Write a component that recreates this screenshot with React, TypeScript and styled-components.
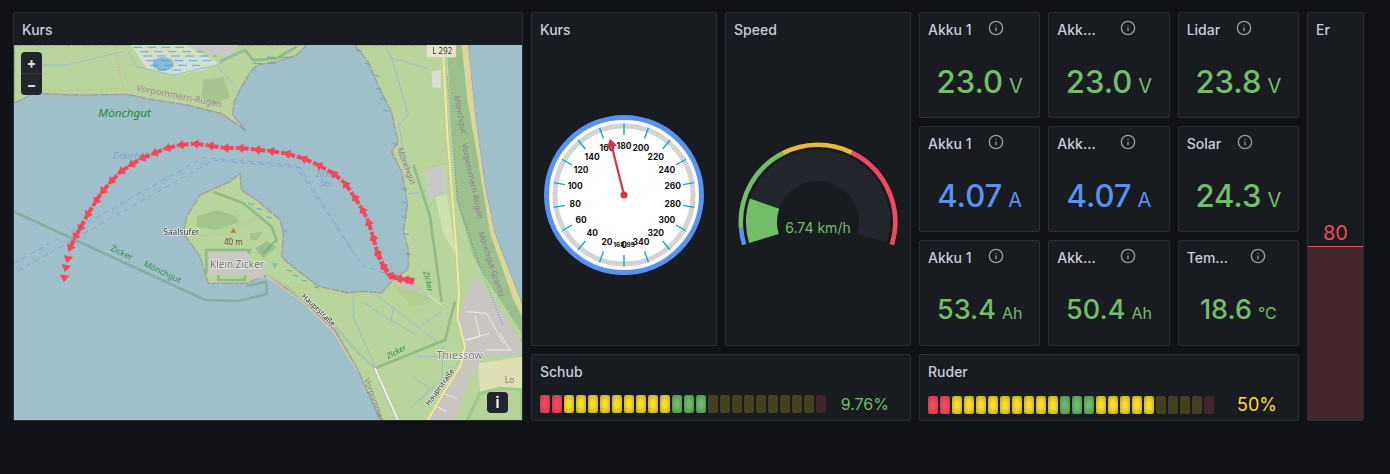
import styled, { createGlobalStyle } from 'styled-components';
import { Info } from 'lucide-react';

const GREEN = '#73bf69';
const BLUE = '#5794f2';
const RED = '#f2495c';
const YELLOW = '#fade2a';

const GlobalStyle = createGlobalStyle`
  html, body {
    margin: 0;
    padding: 0;
    background: #111217;
    font-family: Inter, "Liberation Sans", sans-serif;
    overflow: hidden;
  }
`;

const Dashboard = styled.div`
  display: grid;
  grid-template-columns: 510px 186px 186px repeat(3, 121.33px) 57px;
  grid-template-rows: 106px 106px 106px 67px;
  gap: 8px;
  padding: 12px 0 0 13px;
  height: 462px;
  box-sizing: border-box;
`;

const Panel = styled.section<{ $col?: string; $row?: string }>`
  display: flex;
  flex-direction: column;
  min-width: 0;
  box-sizing: border-box;
  background: #181b1f;
  border: 1px solid #2a2d32;
  border-radius: 2px;
  grid-column: ${(p) => p.$col || 'auto'};
  grid-row: ${(p) => p.$row || 'auto'};
`;

const Header = styled.header`
  display: flex;
  align-items: center;
  flex: none;
  height: 32px;
  padding: 0 8px;
`;

const Title = styled.h2<{ $width?: number }>`
  margin: 0;
  font-size: 14px;
  font-weight: 500;
  color: #ccccdc;
  white-space: nowrap;
  ${(p) => (p.$width ? `width: ${p.$width}px;` : '')}
`;

const InfoIcon = styled(Info)`
  margin-left: 16px;
  margin-top: -2px;
  color: #9a9ca3;
  flex: none;
`;

const MapBody = styled.div`
  position: relative;
  flex: 1;
  min-height: 0;
  overflow: hidden;
  svg {
    display: block;
  }
`;

const MapSvg = styled.svg`
  filter: blur(0.45px);
`;

const ZoomControls = styled.div`
  position: absolute;
  top: 7px;
  left: 7px;
  width: 21px;
  border-radius: 4px;
  overflow: hidden;
  background: #22252b;
`;

const ZoomButton = styled.div`
  display: flex;
  align-items: center;
  justify-content: center;
  height: 21px;
  color: #d8d9df;
  font-size: 14px;
  font-weight: 800;
  line-height: 1;
  & + & {
    border-top: 1px solid #33363c;
  }
`;

const AttributionButton = styled.div`
  position: absolute;
  right: 14px;
  bottom: 7px;
  display: flex;
  align-items: center;
  justify-content: center;
  width: 21px;
  height: 21px;
  border-radius: 4px;
  background: #22252b;
  color: #f0f0f4;
  font-size: 15px;
  font-weight: 700;
`;

const GaugeBody = styled.div`
  flex: 1;
  min-height: 0;
  display: flex;
  align-items: center;
  justify-content: center;
`;

const StatBody = styled.div<{ $color: string }>`
  flex: 1;
  display: flex;
  align-items: baseline;
  justify-content: center;
  padding-top: 14px;
  color: ${(p) => p.$color};
`;

const StatNumber = styled.span<{ $size: number }>`
  font-size: ${(p) => p.$size}px;
  line-height: 46px;
  font-weight: 500;
`;

const StatUnit = styled.span<{ $size: number }>`
  margin-left: 6px;
  font-size: ${(p) => p.$size}px;
  font-weight: 400;
`;

const BarRow = styled.div`
  display: flex;
  align-items: center;
  justify-content: space-between;
  padding: 7px 21px 0 8px;
`;

const Cells = styled.div`
  display: flex;
  gap: 2px;
`;

const Cell = styled.div<{ $color: string; $edge: string; $dim: boolean }>`
  width: 10px;
  height: 18px;
  border-radius: 2px;
  background: ${(p) => (p.$dim
    ? p.$color
    : `radial-gradient(ellipse at center, ${p.$color} 25%, ${p.$edge} 100%)`)};
  opacity: ${(p) => (p.$dim ? 0.2 : 1)};
`;

const BarValue = styled.div<{ $color: string; $size: number }>`
  font-size: ${(p) => p.$size}px;
  color: ${(p) => p.$color};
`;

const ErBody = styled.div`
  flex: 1;
  display: flex;
  flex-direction: column;
  justify-content: flex-end;
  align-items: stretch;
`;

const ErValue = styled.div`
  text-align: center;
  font-size: 20px;
  line-height: 24px;
  margin-bottom: 1px;
  color: ${RED};
`;

const ErFill = styled.div<{ $height: number }>`
  height: ${(p) => p.$height}px;
  background: #43272d;
  border-top: 1px solid ${RED};
`;

const polar = (cx: number, cy: number, r: number, deg: number) => {
  const a = (deg * Math.PI) / 180;
  return [cx + r * Math.sin(a), cy - r * Math.cos(a)];
};

const arcPath = (cx: number, cy: number, r: number, from: number, to: number) => {
  const [x1, y1] = polar(cx, cy, r, from);
  const [x2, y2] = polar(cx, cy, r, to);
  return `M${x1} ${y1}A${r} ${r} 0 ${to - from > 180 ? 1 : 0} 1 ${x2} ${y2}`;
};

const CompassGauge = () => {
  const c = 85;
  const major = Array.from({ length: 18 }, (_, i) => i * 20);
  const minor = Array.from({ length: 180 }, (_, i) => i * 2);
  const [tx, ty] = polar(c, c, 58, -14);
  const [bx, by] = polar(c, c, 50, -14);
  const [lx, ly] = polar(c, c, 50, -20);
  const [rx, ry] = polar(c, c, 50, -8);
  return (
    <svg width={170} height={170} viewBox="0 0 170 170">
      <circle cx={c} cy={c} r={77.5} fill="#fff" stroke={BLUE} strokeWidth={5} />
      <circle cx={c} cy={c} r={69} fill="none" stroke="#d6d6d6" strokeWidth={5} />
      {minor.map((m) => {
        const [x1, y1] = polar(c, c, 66.5, m);
        const [x2, y2] = polar(c, c, 71.5, m);
        return <line key={m} x1={x1} y1={y1} x2={x2} y2={y2} stroke="#c6c6c6" strokeWidth={0.4} />;
      })}
      {major.map((v) => {
        const angle = 180 + v;
        const [x1, y1] = polar(c, c, 71.5, angle);
        const [x2, y2] = polar(c, c, 60, angle);
        const [tx2, ty2] = polar(c, c, 49.5, angle);
        return (
          <g key={v}>
            <line x1={x1} y1={y1} x2={x2} y2={y2} stroke="#0ea5d0" strokeWidth={1.4} />
            <text x={tx2} y={ty2 + 3} textAnchor="middle" fontSize={8.5} fontWeight={700} fill="#111">{v}</text>
          </g>
        );
      })}
      <text x={c} y={c + 52} textAnchor="middle" fontSize={6.5} fontWeight={700} fill="#111">168.95</text>
      <line x1={c} y1={c} x2={bx} y2={by} stroke="#e02f44" strokeWidth={2.2} />
      <polygon points={`${tx},${ty} ${lx},${ly} ${rx},${ry}`} fill="#e02f44" />
      <circle cx={c} cy={c} r={3.5} fill="#e02f44" />
    </svg>
  );
};

const SpeedGauge = () => {
  const cx = 92;
  const cy = 177;
  const ring: [string, number, number][] = [
    [BLUE, -107, -94.5],
    [GREEN, -94.5, -27.3],
    ['#eab839', -27.3, 26],
    [RED, 26, 107],
  ];
  return (
    <svg width={184} height={300} viewBox="0 0 184 300">
      {ring.map(([color, from, to]) => (
        <path key={color} d={arcPath(cx, cy, 77.2, from, to)} fill="none" stroke={color} strokeWidth={4.6} />
      ))}
      <path d={arcPath(cx, cy, 56.5, -71, 107)} fill="none" stroke="#22252b" strokeWidth={31} />
      <path d={arcPath(cx, cy, 56.5, -107, -71)} fill="none" stroke={GREEN} strokeWidth={31} />
      <text x={cx} y={cy + 11} textAnchor="middle" fontSize={14} fill={GREEN}>6.74 km/h</text>
    </svg>
  );
};

const pts = (s: number[]) => {
  const out: string[] = [];
  for (let i = 0; i < s.length; i += 2) out.push(`${s[i]},${s[i + 1]}`);
  return out.join(' ');
};

const NORTH_LAND = [42, 135, 920, 135, 890, 165, 830, 185, 772, 195, 752, 215, 722, 265, 702, 305, 698, 345, 737, 393, 707, 370, 662, 340, 562, 315, 462, 300, 382, 283, 222, 285, 102, 280, 42, 310];
const MAIN_LAND = [1064, 135, 1104, 185, 1134, 255, 1174, 335, 1194, 425, 1175, 455, 1205, 515, 1215, 565, 1222, 615, 1210, 695, 1225, 749, 1224, 809, 1190, 829, 1144, 879, 1094, 874, 1044, 879, 954, 858, 864, 789, 845, 770, 850, 700, 840, 660, 770, 600, 725, 570, 720, 520, 690, 545, 600, 585, 560, 650, 550, 700, 600, 770, 625, 850, 740, 850, 800, 825, 904, 899, 1004, 989, 1074, 1109, 1104, 1179, 1144, 1263, 1566, 1263, 1566, 914, 1484, 699, 1454, 555, 1424, 335, 1404, 135];

const TRACK = [[193, 835], [197, 805], [203, 778], [210, 745], [225, 712], [240, 686], [262, 645], [287, 605], [307, 575], [333, 545], [362, 515], [392, 495], [425, 475], [462, 460], [500, 445], [540, 435], [585, 431], [630, 437], [675, 444], [720, 444], [770, 449], [812, 453], [860, 461], [910, 475], [955, 495], [1000, 520], [1035, 550], [1063, 590], [1087, 628], [1105, 665], [1119, 710], [1131, 755], [1148, 795], [1168, 825], [1195, 836], [1215, 838], [1238, 842]];

const WATERWAYS = [
  '1155,135 1175,175 1285,205', '1175,175 1225,345 1195,375 1225,520', '1210,585 1280,572',
  '1060,880 1060,950 1125,1100', '1088,905 1170,960 1250,1005', '1180,925 1172,970', '1130,885 1310,1025', '1260,980 1325,935',
  '1245,1070 1330,1070', '1330,1040 1325,1140 1230,1225', '1235,1130 1290,1165 1260,1205', '1380,1080 1285,1225',
  '125,195 200,195 370,155', '385,155 410,200 520,225 650,195 710,265', '650,195 735,150', '1090,135 1120,135',
];

const BOUNDARIES = [
  '42,635 615,900 715,903 800,882 798,845 740,858',
  '1240,495 1290,650 1325,905',
  '1125,1105 1335,1020 1365,905',
  '620,820 618,750 750,750 745,760',
  '655,825 655,840 735,840 735,826',
  '640,575 730,610 815,680 830,720 790,760',
  '660,185 735,150 760,180 830,175 890,140',
];

const WET_DASHES = [
  [400, 142, 560], [420, 155, 610], [430, 168, 650], [440, 182, 650], [450, 196, 600], [475, 210, 560], [760, 190, 840], [800, 172, 870],
];

const COAST_DASHES = [
  [1070, 150], [1095, 190], [1122, 225], [1128, 265], [1140, 295], [1150, 330], [1178, 430], [1205, 565], [1205, 605], [1205, 650], [1210, 700], [1218, 760],
  [745, 610], [770, 625], [800, 650], [845, 690], [860, 810], [880, 825], [905, 840], [940, 860],
];

const MapLabel = styled.text<{ $color: string; $size: number; $italic?: boolean; $halo?: boolean }>`
  font-family: "Noto Sans", sans-serif;
  font-size: ${(p) => p.$size}px;
  font-style: ${(p) => (p.$italic ? 'italic' : 'normal')};
  fill: ${(p) => p.$color};
  paint-order: stroke;
  stroke: ${(p) => (p.$halo ? 'rgba(255,255,255,.7)' : 'none')};
  stroke-width: ${(p) => (p.$halo ? 4 : 0)}px;
`;

const label = (x: number, y: number, r: number) => ({
  x,
  y,
  transform: r ? `rotate(${r} ${x} ${y})` : undefined,
});

const Track = () => (
  <g fill={RED}>
    {TRACK.slice(0, -1).map(([x, y], i) => {
      const [nx, ny] = TRACK[i + 1];
      const len = Math.hypot(x - nx, y - ny);
      const dx = (x - nx) / len;
      const dy = (y - ny) / len;
      const n = 14;
      return (
        <g key={`${x}-${y}`}>
          {i > 2 && (
            <line x1={x} y1={y} x2={x - dx * (len - 6)} y2={y - dy * (len - 6)} stroke={RED} strokeWidth={i > 30 ? 15 : 12} strokeDasharray="26 6" />
          )}
          <polygon points={pts([x + dx * 12, y + dy * 12, x - dx * 10 - dy * n, y - dy * 10 + dx * n, x - dx * 10 + dy * n, y - dy * 10 - dx * n])} />
        </g>
      );
    })}
    <polygon points="1245,835 1238,855 1215,845 1215,830" />
  </g>
);

const MapDrawing = () => (
  <MapSvg width={508} height={376} viewBox="42 135 1524 1128">
    <rect x={42} y={135} width={1524} height={1128} fill="#9fc0cb" />
    <polygon points={pts(NORTH_LAND)} fill="#b9d59b" stroke="#a59b9e" strokeWidth={4} strokeDasharray="26 3" />
    <polygon points={pts(MAIN_LAND)} fill="#b9d59b" stroke="#a59b9e" strokeWidth={4} strokeDasharray="26 3" />

    {/* wetland and grey area on the north shore */}
    <polygon points="392,135 440,205 520,225 600,212 660,192 560,135" fill="#d3dfcb" />
    <polygon points="560,135 715,135 690,170 630,165" fill="#c9c8c5" />
    <ellipse cx={490} cy={192} rx={32} ry={20} fill="#86bcd6" />
    {WET_DASHES.map(([x1, y, x2]) => (
      <line key={`${x1}-${y}`} x1={x1} y1={y} x2={x2} y2={y} stroke="#4d9fe0" strokeWidth={2.5} strokeDasharray="26 16" />
    ))}
    <polygon points="610,240 670,232 690,290 640,315 605,290" fill="#a8c491" />

    {/* beach and forest on the east side */}
    <polygon points="1385,135 1404,135 1424,335 1454,555 1484,699 1566,914 1566,950 1540,900 1470,700 1432,470 1402,300" fill="#dcd59c" />
    <polygon points="1340,135 1385,135 1402,300 1432,470 1470,700 1540,900 1566,950 1566,1000 1480,870 1420,770 1370,600" fill="#9cc08c" />
    <polygon points="1305,590 1340,580 1370,770 1330,700" fill="#cde3ad" />
    <polygon points="1275,510 1335,495 1340,580 1285,600" fill="#c9c8c3" />
    <polygon points="1295,215 1322,210 1322,265 1297,262" fill="#dcdcd8" />

    {/* Thiessow */}
    <polygon points="1394,899 1424,829 1470,880 1566,1029 1566,1062 1530,1065 1450,1070 1420,1120 1395,1170 1365,1263 1285,1263 1330,1180 1380,1100 1395,1040 1375,950" fill="#c9c6c2" />
    <polygon points="1435,1090 1566,1070 1566,1170 1500,1165 1440,1180" fill="#dee0b4" />
    <polygon points="1440,1180 1500,1165 1566,1170 1566,1263 1400,1263" fill="#b7d39a" stroke="#9ccb8b" strokeWidth={10} />
    <path d="M1400 935 L1460 940 L1510 1030 M1425 945 L1440 1010 L1400 1020 M1470 1000 L1395 1020 M1460 1050 L1535 1050 M1500 1000 L1530 1050 M1340 1235 L1300 1215 M1330 1180 L1370 1195" fill="none" stroke="#eeece9" strokeWidth={3} />

    {/* building near the jetty */}
    <polygon points="1180,840 1245,850 1300,905 1240,920 1190,870" fill="#b3cf96" />
    <polygon points="1185,835 1240,850 1290,895 1250,870 1195,860" fill="#c7c5c1" />
    <line x1={1285} y1={885} x2={1325} y2={915} stroke="#e8e6e3" strokeWidth={3} />

    {/* Klein Zicker */}
    <polygon points="590,650 650,630 700,645 720,665 650,690 590,680" fill="#a4c68c" />
    <polygon points="750,700 790,695 770,720 750,720" fill="#a4c68c" />
    <polygon points="765,745 800,725 830,740 790,775" fill="#9cc08c" />
    <rect x={628} y={755} width={122} height={70} fill="#c9c8c4" />
    <polygon points="750,800 800,790 790,835 755,835" fill="#c9c6c2" />
    <polygon points="700,683 691,698 709,698" fill="#c27c3c" />
    <polygon points="815,790 832,790 825,808" fill="#7cc5a5" />
    <polyline points="800,825 860,860 915,905 1015,990 1075,1060 1125,1105" fill="none" stroke="#9fb49c" strokeWidth={6} />
    <polyline points="800,825 860,860 915,905 1015,990 1075,1060 1125,1105" fill="none" stroke="#cfd8c2" strokeWidth={2.5} />
    <polyline points="800,830 904,902 1000,995 1070,1110" fill="none" stroke="#e2c89a" strokeWidth={4} />

    {BOUNDARIES.map((b) => (
      <polyline key={b} points={b} fill="none" stroke="#5f9e6e" strokeOpacity={0.45} strokeWidth={8} />
    ))}
    {WATERWAYS.map((w) => (
      <polyline key={w} points={w} fill="none" stroke="#96c0d2" strokeWidth={3} />
    ))}
    {COAST_DASHES.map(([x, y]) => (
      <line key={`${x}-${y}`} x1={x} y1={y} x2={x + 16} y2={y + 4} stroke="#4d9fe0" strokeWidth={2.5} />
    ))}

    {/* roads and footpaths */}
    <polyline points="1328,135 1342,400 1370,760 1377,880 1372,950 1395,1040 1380,1100 1330,1180 1282,1263" fill="none" stroke="#c9c28a" strokeWidth={9} />
    <polyline points="1328,135 1342,400 1370,760 1377,880 1372,950 1395,1040 1380,1100 1330,1180 1282,1263" fill="none" stroke="#efeaa3" strokeWidth={6} />
    <polyline points="1125,1105 1195,1263" fill="none" stroke="#a9a9a6" strokeWidth={9} />
    <polyline points="1125,1105 1195,1263" fill="none" stroke="#f4f2ee" strokeWidth={6} />
    <polyline points="1342,230 1372,600 1440,800 1510,980" fill="none" stroke="#3566d8" strokeWidth={2} strokeDasharray="3 5" />
    <polyline points="100,275 370,265 350,180 345,135" fill="none" stroke="#d9a184" strokeWidth={2} strokeDasharray="4 5" />
    <polyline points="580,710 680,700 780,650 770,640" fill="none" stroke="#d9a184" strokeWidth={2} strokeDasharray="4 5" />
    <polyline points="880,860 1060,890 1180,860 1300,900" fill="none" stroke="#d9a184" strokeWidth={2} strokeDasharray="4 5" />
    <polyline points="1250,510 1340,490 1420,480" fill="none" stroke="#d9a184" strokeWidth={2} strokeDasharray="4 5" />
    <polyline points="1370,720 1450,680 1500,670" fill="none" stroke="#d9a184" strokeWidth={2} strokeDasharray="4 5" />

    {/* shipping lanes */}
    <polyline points="42,790 610,473 885,495 1085,795 1155,820" fill="none" stroke="#7d9ce2" strokeWidth={2.5} strokeDasharray="16 12" />
    <polyline points="55,812 640,481 900,503 1075,780" fill="none" stroke="#7d9ce2" strokeWidth={2.5} strokeDasharray="16 12" />

    <MapLabel $color="#1f8c24" $size={35} $italic {...label(295, 350, 0)}>Mönchgut</MapLabel>
    <MapLabel $color="#a4849b" $size={27} {...label(408, 272, 11)}>Vorpommern-Rügen</MapLabel>
    <MapLabel $color="#7fa0c6" $size={25} $italic {...label(338, 478, 0)}>Zickerhöft</MapLabel>
    <MapLabel $color="#7fa0c6" $size={24} $italic {...label(947, 530, 0)}>Zicker</MapLabel>
    <MapLabel $color="#7fa0c6" $size={24} $italic {...label(960, 557, 0)}>See</MapLabel>
    <MapLabel $color="#333" $size={25} $halo {...label(490, 704, 0)}>Saalsufer</MapLabel>
    <MapLabel $color="#6d4b38" $size={24} {...label(672, 734, 0)}>40 m</MapLabel>
    <MapLabel $color="#6d6d6d" $size={30} $halo {...label(630, 805, 0)}>Klein Zicker</MapLabel>
    <MapLabel $color="#2f8f45" $size={25} {...label(330, 750, 26)}>Zicker</MapLabel>
    <MapLabel $color="#2f8f45" $size={25} {...label(430, 797, 26)}>Mönchgut</MapLabel>
    <MapLabel $color="#8f7a92" $size={24} {...label(1362, 288, 79)}>Mönchgut</MapLabel>
    <MapLabel $color="#8f7a92" $size={24} {...label(1385, 432, 78)}>Vorpommern-Rügen</MapLabel>
    <MapLabel $color="#8f7a92" $size={24} {...label(1435, 698, 72)}>Mönchgut-Granitz</MapLabel>
    <MapLabel $color="#8f7a92" $size={24} {...label(1190, 448, 68)}>Mönchgut</MapLabel>
    <MapLabel $color="#8f7a92" $size={24} {...label(1092, 1138, 70)}>Vorpommern</MapLabel>
    <MapLabel $color="#2f8f45" $size={24} $italic {...label(1270, 815, 78)}>Zicker</MapLabel>
    <MapLabel $color="#2f8f45" $size={24} $italic {...label(1165, 1077, -28)}>Zicker</MapLabel>
    <MapLabel $color="#222" $size={22} $halo {...label(904, 890, 44)}>Hauptstraße</MapLabel>
    <MapLabel $color="#222" $size={22} $halo {...label(1288, 1218, -54)}>Hauptstraße</MapLabel>
    <MapLabel $color="#7a7a7a" $size={32} $halo {...label(1310, 1077, 0)}>Thiessow</MapLabel>
    <MapLabel $color="#8c7a6f" $size={26} {...label(1514, 1150, 0)}>Lo</MapLabel>
    <rect x={1280} y={135} width={88} height={37} rx={3} fill="#e7e3cb" stroke="#c9c6ae" />
    <MapLabel $color="#333" $size={24} {...label(1297, 162, 0)}>L 292</MapLabel>

    <Track />
  </MapSvg>
);

const STATS = [
  { title: 'Akku 1', value: '23.0', unit: 'V', color: GREEN },
  { title: 'Akk...', value: '23.0', unit: 'V', color: GREEN, width: 47 },
  { title: 'Lidar', value: '23.8', unit: 'V', color: GREEN },
  { title: 'Akku 1', value: '4.07', unit: 'A', color: BLUE },
  { title: 'Akk...', value: '4.07', unit: 'A', color: BLUE, width: 47 },
  { title: 'Solar', value: '24.3', unit: 'V', color: GREEN },
  { title: 'Akku 1', value: '53.4', unit: 'Ah', color: GREEN, small: true },
  { title: 'Akk...', value: '50.4', unit: 'Ah', color: GREEN, small: true, width: 47 },
  { title: 'Tem...', value: '18.6', unit: '°C', color: GREEN, small: true, width: 47 },
];

const CELL_COLORS: Record<string, [string, string]> = {
  r: [RED, '#bf3a4c'],
  y: ['#fade2a', '#b9a21f'],
  g: ['#6fb868', '#4a8a50'],
};

const BarGauge = ({ cells, lit }: { cells: string; lit: number }) => (
  <Cells>
    {cells.split('').map((kind, i) => {
      const [color, edge] = CELL_COLORS[kind];
      // eslint-disable-next-line react/no-array-index-key
      return <Cell key={i} $color={color} $edge={edge} $dim={i >= lit} />;
    })}
  </Cells>
);

const BAR_CELLS = `rr${'y'.repeat(9)}ggg${'y'.repeat(9)}r`;

export default function App() {
  return (
    <>
      <GlobalStyle />
      <Dashboard>
        <Panel $col="1" $row="1 / -1">
          <Header><Title>Kurs</Title></Header>
          <MapBody>
            <MapDrawing />
            <ZoomControls>
              <ZoomButton>+</ZoomButton>
              <ZoomButton>−</ZoomButton>
            </ZoomControls>
            <AttributionButton>i</AttributionButton>
          </MapBody>
        </Panel>

        <Panel $col="2" $row="1 / 4">
          <Header><Title>Kurs</Title></Header>
          <GaugeBody><CompassGauge /></GaugeBody>
        </Panel>

        <Panel $col="3" $row="1 / 4">
          <Header><Title>Speed</Title></Header>
          <GaugeBody><SpeedGauge /></GaugeBody>
        </Panel>

        {STATS.map((s) => (
          <Panel key={`${s.title}-${s.value}`}>
            <Header>
              <Title $width={s.width}>{s.title}</Title>
              <InfoIcon size={16} />
            </Header>
            <StatBody $color={s.color}>
              <StatNumber $size={s.small ? 27 : 31}>{s.value}</StatNumber>
              <StatUnit $size={s.small ? 16 : 20}>{s.unit}</StatUnit>
            </StatBody>
          </Panel>
        ))}

        <Panel $col="2 / 4" $row="4">
          <Header><Title>Schub</Title></Header>
          <BarRow>
            <BarGauge cells={BAR_CELLS} lit={14} />
            <BarValue $color={GREEN} $size={16}>9.76%</BarValue>
          </BarRow>
        </Panel>

        <Panel $col="4 / 7" $row="4">
          <Header><Title>Ruder</Title></Header>
          <BarRow>
            <BarGauge cells={BAR_CELLS} lit={19} />
            <BarValue $color={YELLOW} $size={18}>50%</BarValue>
          </BarRow>
        </Panel>

        <Panel $col="7" $row="1 / -1">
          <Header><Title>Er</Title></Header>
          <ErBody>
            <ErValue>80</ErValue>
            <ErFill $height={173} />
          </ErBody>
        </Panel>
      </Dashboard>
    </>
  );
}
